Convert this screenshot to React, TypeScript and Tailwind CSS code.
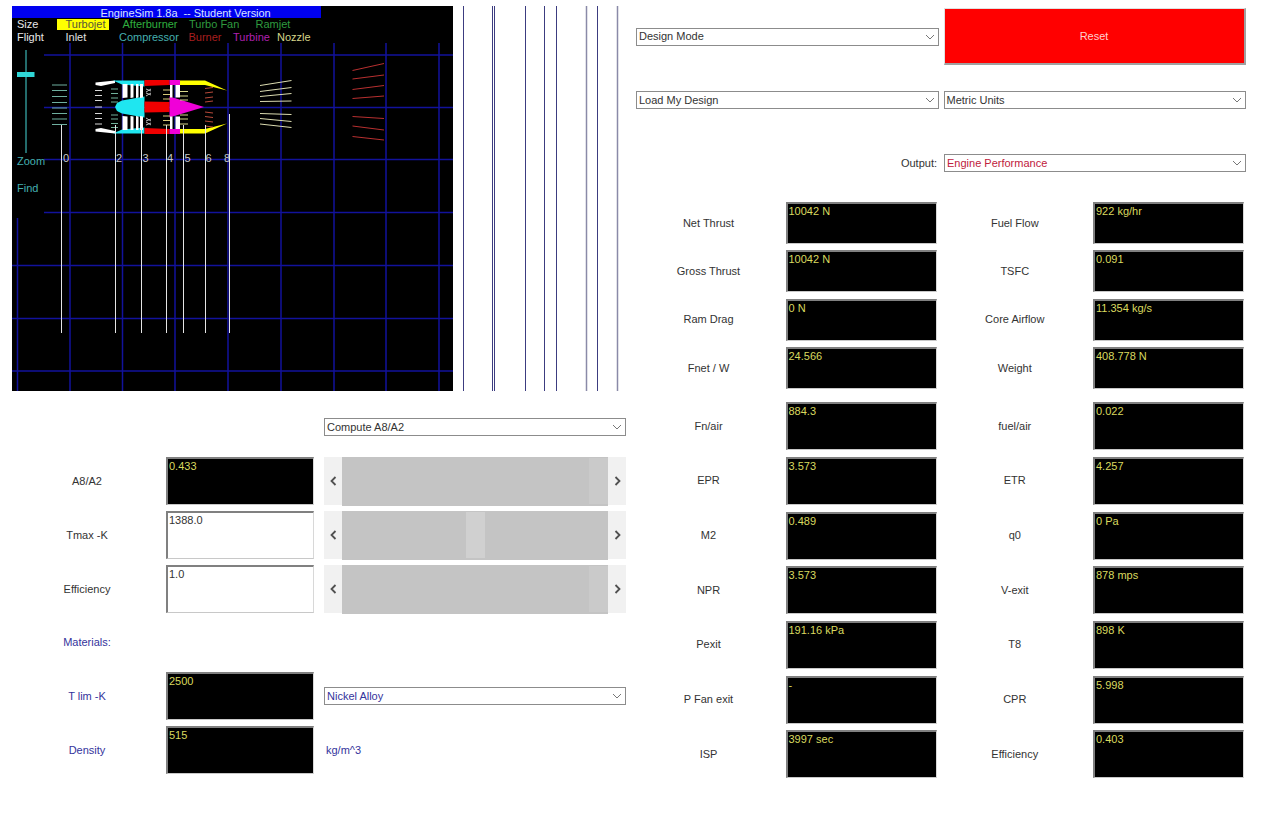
const grayBox = "border-t-2 border-l-2 border-t-[#808080] border-l-[#808080] border-r border-b border-r-[#d8d8d8] border-b-[#c8c8c8]";

const Chevron = () => (
  <svg width="10" height="6" viewBox="0 0 10 6" className="shrink-0">
    <path d="M1 1l4 4 4-4" fill="none" stroke="#777" strokeWidth="1" />
  </svg>
);

const Select = ({ label, width, color = "text-[#333]" }: { label: string; width: string; color?: string }) => (
  <div className={`${width} h-[18px] shrink-0 flex items-center justify-between border border-[#8c8c8c] bg-white pl-[2px] pr-[3px] ${color}`}>
    <span>{label}</span>
    <Chevron />
  </div>
);

const ValueBox = ({ value, height, width = "w-[151px]" }: { value: string; height: string; width?: string }) => (
  <div className={`${width} ${height} shrink-0 bg-black ${grayBox} pl-[1px] leading-[14px] text-[#d9d95f]`}>
    {value}
  </div>
);

const Arrow = ({ dir }: { dir: "left" | "right" }) => (
  <div className="w-[18px] h-full flex items-center justify-center bg-[#f1f1f1]">
    <svg width="7" height="10" viewBox="0 0 7 10">
      <path d={dir === "left" ? "M5.5 1l-4 4 4 4" : "M1.5 1l4 4-4 4"} fill="none" stroke="#505050" strokeWidth="1.8" />
    </svg>
  </div>
);

// thumb is drawn as a slightly lighter gap in the track
const Slider = ({ gapLeft, gap }: { gapLeft: number; gap: string }) => (
  <div className="w-[302px] h-[48px] flex items-center bg-[#f1f1f1]">
    <Arrow dir="left" />
    <div className="flex-1 h-[49px] flex items-center bg-[#c4c4c4]">
      <div className={`h-[46px] w-[19px] ${gap}`} style={{ marginLeft: gapLeft }} />
    </div>
    <Arrow dir="right" />
  </div>
);

const LeftRow = ({ label, children, blue }: { label: string; children: React.ReactNode; blue?: boolean }) => (
  <div className="flex items-center">
    <div className={`w-[150px] text-center ${blue ? "text-[#34349c]" : "text-[#333]"}`}>{label}</div>
    <div className="w-[4px]" />
    {children}
  </div>
);

const OutRow = ({ a, b, height }: { a: [string, string]; b: [string, string]; height: string }) => (
  <div className="flex items-center">
    <div className="w-[145px] text-center text-[#333]">{a[0]}</div>
    <div className="w-[4.5px]" />
    <ValueBox value={a[1]} height={height} />
    <div className="w-[156.5px] text-center text-[#333]">{b[0]}</div>
    <ValueBox value={b[1]} height={height} />
  </div>
);

const topRows: [[string, string], [string, string]][] = [
  [["Net Thrust", "10042 N"], ["Fuel Flow", "922 kg/hr"]],
  [["Gross Thrust", "10042 N"], ["TSFC", "0.091"]],
  [["Ram Drag", "0 N"], ["Core Airflow", "11.354 kg/s"]],
  [["Fnet / W", "24.566"], ["Weight", "408.778 N"]],
];

const bottomRows: [[string, string], [string, string]][] = [
  [["Fn/air", "884.3"], ["fuel/air", "0.022"]],
  [["EPR", "3.573"], ["ETR", "4.257"]],
  [["M2", "0.489"], ["q0", "0 Pa"]],
  [["NPR", "3.573"], ["V-exit", "878 mps"]],
  [["Pexit", "191.16 kPa"], ["T8", "898 K"]],
  [["P Fan exit", "-"], ["CPR", "5.998"]],
  [["ISP", "3997 sec"], ["Efficiency", "0.403"]],
];

const Line = ({ p, c, w = 1 }: { p: number[]; c: string; w?: number }) => (
  <line x1={p[0]} y1={p[1]} x2={p[2]} y2={p[3]} stroke={c} strokeWidth={w} />
);

const CY = 107;
// same shape above and below the axis
const mirror = (pts: number[][]) => pts.map(([x, y]) => `${x},${2 * CY - y}`).join(" ");
const pts = (list: number[][]) => list.map(([x, y]) => `${x},${y}`).join(" ");

const Both = ({ list, fill }: { list: number[][]; fill: string }) => (
  <>
    <polygon points={pts(list)} fill={fill} />
    <polygon points={mirror(list)} fill={fill} />
  </>
);

const dashes = (x1: number, x2: number, ys: number[], c: string, slope = 0) =>
  ys.flatMap((y) => {
    const s = y < CY ? -slope : slope;
    return [<Line key={`${x1}-${y}`} p={[x1, y, x2, y + s]} c={c} />];
  });

const GRID = "#12129c";

const Canvas = () => (
  <svg width="615" height="385" viewBox="12 6 615 385" className="block text-[11px]">
    <rect x="12" y="6" width="441" height="385" fill="#000" />
    {/* stray grid lines running past the panel */}
    {[463.5, 492.5, 494.5, 525.5, 544.5, 556.5].map((x) => (
      <line key={x} x1={x} y1="6" x2={x} y2="391" stroke="#3c3c80" />
    ))}
    {[586.5, 597.5, 617.5].map((x) => (
      <line key={x} x1={x} y1="6" x2={x} y2="391" stroke={x === 597.5 ? "#3c3c80" : "#8a8aa8"} strokeWidth={x === 597.5 ? 1 : 1.5} />
    ))}
    {[70, 122.5, 175, 228, 281, 334, 386, 439].map((x) => (
      <line key={x} x1={x} y1="43" x2={x} y2="391" stroke={GRID} strokeWidth="1.5" />
    ))}
    <line x1="17.5" y1="218" x2="17.5" y2="391" stroke={GRID} strokeWidth="1.5" />
    {[55, 107.5, 159.5, 212.5].map((y) => (
      <line key={y} x1="44" y1={y} x2="453" y2={y} stroke={GRID} strokeWidth="1.5" />
    ))}
    {[265.5, 318.5, 371].map((y) => (
      <line key={y} x1="12" y1={y} x2="453" y2={y} stroke={GRID} strokeWidth="1.5" />
    ))}

    <rect x="12" y="6" width="309" height="12" fill="#0000f0" />
    <text x="100.5" y="16.5" fill="#d8e4ff" letterSpacing="-0.05">EngineSim 1.8a{"\u00a0 "}-- Student Version</text>
    <rect x="57" y="19" width="52" height="11" fill="#ffff00" />
    <text x="17" y="28" fill="#e8e8e8">Size</text>
    <text x="65.5" y="28" fill="#55553a">Turbojet</text>
    <text x="122.5" y="28" fill="#2fae3f">Afterburner</text>
    <text x="189" y="28" fill="#2f9a3f">Turbo Fan</text>
    <text x="255.5" y="28" fill="#2f9a3f">Ramjet</text>
    <text x="17" y="41" fill="#e8e8e8">Flight</text>
    <text x="65.5" y="41" fill="#e0e0e0">Inlet</text>
    <text x="119" y="41" fill="#45b0b0">Compressor</text>
    <text x="188.5" y="41" fill="#a81f1f">Burner</text>
    <text x="233" y="41" fill="#b020b0">Turbine</text>
    <text x="277" y="41" fill="#d6d68a">Nozzle</text>
    <text x="17" y="165" fill="#45b0b0">Zoom</text>
    <text x="17" y="191.5" fill="#45b0b0">Find</text>

    <line x1="26" y1="50" x2="26" y2="153" stroke="#2f9090" strokeWidth="1.5" />
    <rect x="17" y="72" width="17.5" height="5" fill="#2fd6d6" />

    {[85, 90.5, 96.5, 102.5, 108, 113.5, 119, 124.5].map((y) => (
      <Line key={y} p={[52, y, 67, y]} c="#6fb0a0" />
    ))}

    {/* engine */}
    <Both list={[[95.5, 82.5], [115, 80.5], [115, 83], [101, 86], [95.5, 85]]} fill="#fff" />
    <Both list={[[113, 80.5], [144.5, 80.5], [144.5, 86.5], [122, 84.5]]} fill="#1fe6f0" />
    <Both list={[[144.5, 80], [169.5, 80], [169.5, 85], [144.5, 86]]} fill="#f00000" />
    <Both list={[[169.5, 80], [180, 80], [180, 85], [169.5, 85]]} fill="#f000d8" />
    <Both list={[[180, 80.5], [205, 80.5], [227, 90.5], [205, 85], [180, 85]]} fill="#ffff00" />
    <polygon points="115,107 117,103 122,100.5 144.5,96.5 144.5,117.5 122,113.5 117,111" fill="#1fe6f0" />
    <polygon points="144.5,101.5 169.5,102 169.5,112 144.5,112.5" fill="#f00000" />
    <polygon points="169.5,96.5 204,107 169.5,117.5" fill="#f000d8" />

    {[[122.5, 5], [130.5, 3], [136, 2.5], [140, 3]].map(([x, w]) => (
      <Both key={x} list={[[x, 84], [x + w, 84], [x + w, 97.5], [x, 98]]} fill="#fff" />
    ))}
    {[[170, 2.5], [175.5, 4.5]].map(([x, w]) => (
      <Both key={x} list={[[x, 85], [x + w, 85], [x + w, 97.5], [x, 97.5]]} fill="#fff" />
    ))}
    {[89, 93].map((y) => (
      <g key={y}>
        <Line p={[146, y + 3, 151, y]} c="#b8b8b8" />
        <Line p={[146, y, 151, y + 2]} c="#b8b8b8" />
        <Line p={[146, 2 * CY - y - 3, 151, 2 * CY - y]} c="#b8b8b8" />
        <Line p={[146, 2 * CY - y, 151, 2 * CY - y - 2]} c="#b8b8b8" />
      </g>
    ))}
    {dashes(95, 102, [90.5, 95.5, 100.5, 107, 113.5, 118.5, 124], "#d8d8d8")}
    {dashes(111, 118, [89, 93.5, 98, 102, 115, 119, 123.5, 127.5], "#70b09a")}
    {dashes(163, 170, [90, 94.5, 99, 116, 120.5, 125], "#d8c878")}
    {dashes(180, 188, [91.5, 96, 100, 115, 119, 124], "#d6d68a")}
    {dashes(205, 213, [88.5, 93, 98, 102, 112, 116.5, 121, 126], "#b84a3a", 1)}

    {/* station markers */}
    {[
      [63, "0"],
      [116, "2"],
      [142.5, "3"],
      [167, "4"],
      [184.5, "5"],
      [205.5, "6"],
      [224, "8"],
    ].map(([x, n]) => (
      <text key={n} x={x} y="161.5" fill="#c8c8c8">{n}</text>
    ))}
    {[
      [61.5, 125],
      [115.5, 125],
      [141.5, 128],
      [166.5, 125],
      [183.5, 125],
      [205.5, 125],
      [229.5, 114],
    ].map(([x, y]) => (
      <line key={x} x1={x} y1={y} x2={x} y2="333" stroke="#e4e4e4" />
    ))}

    {/* exhaust */}
    {[
      [260, 85.5, 291.5, 80.5],
      [260, 91.5, 291.5, 87.5],
      [260, 96.5, 291.5, 93.5],
      [260, 101.5, 291.5, 101],
      [260, 113.5, 291.5, 114.5],
      [260, 118.5, 291.5, 121.5],
      [260, 124, 291.5, 127.5],
    ].map((p) => (
      <Line key={p[1]} p={p} c="#dcdcb0" />
    ))}
    {[
      [352.5, 70.5, 384, 63.5],
      [352.5, 79, 384, 75],
      [352.5, 89.5, 384, 85.5],
      [352.5, 98.5, 384, 96],
      [352.5, 116.5, 384, 118.5],
      [352.5, 126, 384, 130],
      [352.5, 136.5, 384, 140],
    ].map((p) => (
      <Line key={p[1]} p={p} c="#b83030" />
    ))}
  </svg>
);

export default function App() {
  return (
    <div className="w-[1280px] h-[825px] bg-white overflow-hidden flex text-[11px] leading-[13px] font-['Liberation_Sans',Arial,sans-serif]">
      <div className="w-[624px] ml-[12px] pt-[6px] shrink-0">
        <Canvas />
        <div className="mt-[27px] ml-[312px]">
          <Select label="Compute A8/A2" width="w-[302px]" />
        </div>
        <div className="mt-[21px] flex flex-col gap-[6px]">
          <LeftRow label="A8/A2">
            <ValueBox value="0.433" height="h-[48px]" width="w-[147.5px]" />
            <div className="w-[10.5px]" />
            <Slider gapLeft={247} gap="bg-[#cacaca]" />
          </LeftRow>
          <LeftRow label="Tmax -K">
            <div className={`w-[147.5px] h-[48px] bg-white ${grayBox} pl-[1px] leading-[14px] text-[#333]`}>1388.0</div>
            <div className="w-[10.5px]" />
            <Slider gapLeft={124} gap="bg-[#d0d0d0]" />
          </LeftRow>
          <LeftRow label="Efficiency">
            <div className={`w-[147.5px] h-[48px] bg-white ${grayBox} pl-[1px] leading-[14px] text-[#333]`}>1.0</div>
            <div className="w-[10.5px]" />
            <Slider gapLeft={247} gap="bg-[#cacaca]" />
          </LeftRow>
        </div>
        <div className="mt-[23px]">
          <LeftRow label="Materials:" blue>
            <span />
          </LeftRow>
        </div>
        <div className="mt-[23px] flex flex-col gap-[6px]">
          <LeftRow label="T lim -K" blue>
            <ValueBox value="2500" height="h-[48px]" width="w-[147.5px]" />
            <div className="w-[10.5px]" />
            <Select label="Nickel Alloy" width="w-[302px]" color="text-[#34349c]" />
          </LeftRow>
          <LeftRow label="Density" blue>
            <ValueBox value="515" height="h-[48px]" width="w-[147.5px]" />
            <div className="w-[10.5px]" />
            <span className="pl-[2px] text-[#34349c]">kg/m^3</span>
          </LeftRow>
        </div>
      </div>

      <div className="w-[610px] pt-[8px] flex flex-col">
        <div className="flex items-center gap-[5px]">
          <Select label="Design Mode" width="w-[302.5px]" />
          <button className="w-[302px] h-[57px] bg-[#ff0000] text-[#ffd0d0] border-t border-l border-t-[#e0e0e0] border-l-[#e0e0e0] border-r-2 border-b-2 border-r-[#a0a0a0] border-b-[#a0a0a0]">
            Reset
          </button>
        </div>
        <div className="mt-[26px] flex gap-[5px]">
          <Select label="Load My Design" width="w-[302.5px]" />
          <Select label="Metric Units" width="w-[302px]" />
        </div>
        <div className="mt-[45px] flex items-center justify-end gap-[7px] text-[#333]">
          <span>Output:</span>
          <Select label="Engine Performance" width="w-[302px]" color="text-[#c0203c]" />
        </div>
        <div className="mt-[30px] flex flex-col gap-[6.4px]">
          {topRows.map(([a, b]) => (
            <OutRow key={a[0]} a={a} b={b} height="h-[42px]" />
          ))}
        </div>
        <div className="mt-[13px] flex flex-col gap-[6.7px]">
          {bottomRows.map(([a, b]) => (
            <OutRow key={a[0]} a={a} b={b} height="h-[48px]" />
          ))}
        </div>
      </div>
    </div>
  );
}
